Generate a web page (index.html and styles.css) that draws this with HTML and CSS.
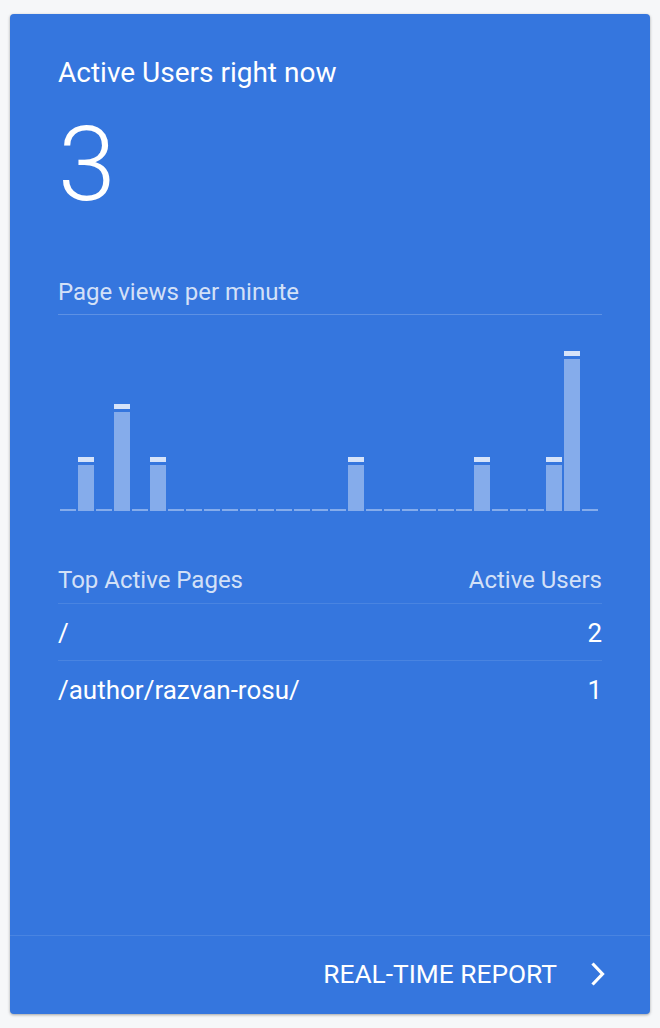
FILE: index.html
```html
<!DOCTYPE html>
<html>
<head>
<meta charset="utf-8">
<link rel="stylesheet" href="styles.css">
</head>
<body>
<div class="card">
  <div class="main">
    <div class="title">Active Users right now</div>
    <div class="count">3</div>
    <div class="subtitle">Page views per minute</div>
    <div class="chart">
      <div class="bar zero"></div>
      <div class="bar"><div class="cap"></div><div class="body" style="height:46px"></div></div>
      <div class="bar zero"></div>
      <div class="bar"><div class="cap"></div><div class="body" style="height:99px"></div></div>
      <div class="bar zero"></div>
      <div class="bar"><div class="cap"></div><div class="body" style="height:46px"></div></div>
      <div class="bar zero"></div>
      <div class="bar zero"></div>
      <div class="bar zero"></div>
      <div class="bar zero"></div>
      <div class="bar zero"></div>
      <div class="bar zero"></div>
      <div class="bar zero"></div>
      <div class="bar zero"></div>
      <div class="bar zero"></div>
      <div class="bar zero"></div>
      <div class="bar"><div class="cap"></div><div class="body" style="height:46px"></div></div>
      <div class="bar zero"></div>
      <div class="bar zero"></div>
      <div class="bar zero"></div>
      <div class="bar zero"></div>
      <div class="bar zero"></div>
      <div class="bar zero"></div>
      <div class="bar"><div class="cap"></div><div class="body" style="height:46px"></div></div>
      <div class="bar zero"></div>
      <div class="bar zero"></div>
      <div class="bar zero"></div>
      <div class="bar"><div class="cap"></div><div class="body" style="height:46px"></div></div>
      <div class="bar"><div class="cap"></div><div class="body" style="height:152px"></div></div>
      <div class="bar zero"></div>
    </div>
    <div class="table">
      <div class="row head"><span>Top Active Pages</span><span>Active Users</span></div>
      <div class="row"><span>/</span><span>2</span></div>
      <div class="row last"><span>/author/razvan-rosu/</span><span>1</span></div>
    </div>
  </div>
  <div class="footer">
    <span class="link">REAL-TIME REPORT</span>
    <svg class="chev" width="18" height="26" viewBox="0 0 18 26"><polyline points="3.5,2.5 13.5,13 3.5,23.5" fill="none" stroke="#fff" stroke-width="3.2"/></svg>
  </div>
</div>
</body>
</html>
```
FILE: styles.css
```css
html, body {
  margin: 0;
  padding: 0;
}
body {
  background: #f6f7f9;
  padding: 14px 10px;
  font-family: Roboto, "Liberation Sans", sans-serif;
  color: #fff;
}
.card {
  box-sizing: border-box;
  height: 1000px;
  background: #3576de;
  border-radius: 4px;
  box-shadow: 0 1px 3px rgba(0,0,0,0.35);
  display: flex;
  flex-direction: column;
}
.main {
  padding: 42px 48px 0;
}
.title {
  font-size: 28px;
  line-height: 33px;
}
.count {
  font-size: 104px;
  font-weight: 300;
  line-height: 122px;
  margin-top: 15px;
}
.subtitle {
  margin-top: 52px;
  font-size: 24px;
  line-height: 28px;
  color: rgba(255,255,255,0.8);
  padding-bottom: 8px;
  border-bottom: 1px solid rgba(255,255,255,0.2);
}
.chart {
  height: 196px;
  display: flex;
  align-items: flex-end;
  gap: 2px;
  padding-left: 2px;
}
.bar {
  width: 16px;
  display: flex;
  flex-direction: column;
}
.bar.zero {
  height: 2px;
  background: rgba(255,255,255,0.4);
}
.cap {
  height: 5px;
  margin-bottom: 3px;
  background: rgba(255,255,255,0.8);
}
.body {
  background: rgba(255,255,255,0.4);
}
.table {
  margin-top: 55px;
}
.row {
  display: flex;
  justify-content: space-between;
  font-size: 26px;
  line-height: 30px;
  padding: 14px 0 12px;
  border-bottom: 1px solid rgba(255,255,255,0.1);
}
.row.head {
  font-size: 24px;
  line-height: 28px;
  padding-top: 0;
  padding-bottom: 9px;
  color: rgba(255,255,255,0.8);
}
.row.last {
  border-bottom: none;
}
.footer {
  margin-top: auto;
  height: 75px;
  border-top: 1px solid rgba(255,255,255,0.1);
  display: flex;
  align-items: center;
  justify-content: flex-end;
  padding-right: 43px;
  padding-bottom: 3px;
  box-sizing: content-box;
}
.link {
  font-size: 26.3px;
  line-height: 30px;
}
.chev {
  margin-left: 32px;
  display: block;
}
```
